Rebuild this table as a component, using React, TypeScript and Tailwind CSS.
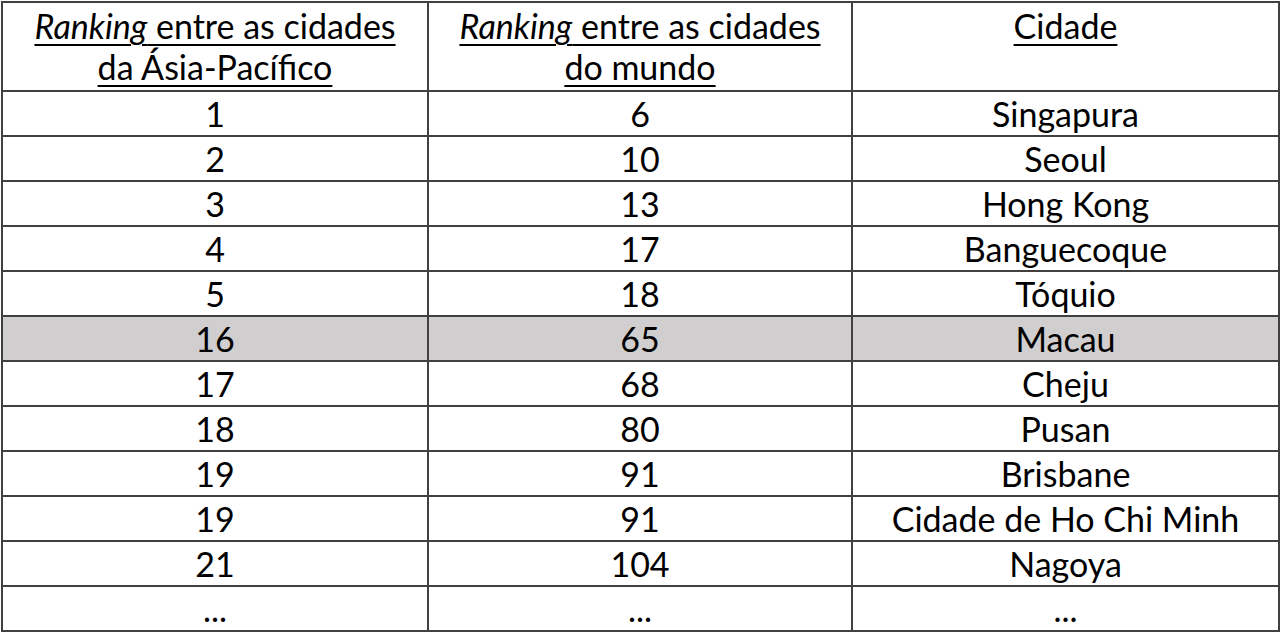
const rows: [string, string, string][] = [
  ['1', '6', 'Singapura'],
  ['2', '10', 'Seoul'],
  ['3', '13', 'Hong Kong'],
  ['4', '17', 'Banguecoque'],
  ['5', '18', 'Tóquio'],
  ['16', '65', 'Macau'],
  ['17', '68', 'Cheju'],
  ['18', '80', 'Pusan'],
  ['19', '91', 'Brisbane'],
  ['19', '91', 'Cidade de Ho Chi Minh'],
  ['21', '104', 'Nagoya'],
  ['...', '...', '...'],
];

const cell = 'border-2 border-[#404040] text-center align-middle p-0 leading-[40px]';
const head = 'border-2 border-[#404040] text-center align-top p-0 pt-[2px] leading-[41px]';
const ul = 'underline decoration-[2px] underline-offset-[5px]';

export default function App() {
  return (
    <div className="bg-white w-[1280px] h-[635px] pt-px pl-px font-['Lato',sans-serif] text-[34px] text-black">
      <table className="border-collapse border-2 border-[#404040] w-[1277px] table-fixed">
        <colgroup>
          <col className="w-[426px]" />
          <col className="w-[424px]" />
          <col className="w-[427px]" />
        </colgroup>
        <thead>
          <tr className="h-[89px]">
            <th className={`${head} font-normal`}>
              <span className={ul}>
                <i>Ranking</i> entre as cidades
              </span>
              <br />
              <span className={ul}>da Ásia-Pacífico</span>
            </th>
            <th className={`${head} font-normal`}>
              <span className={ul}>
                <i>Ranking</i> entre as cidades
              </span>
              <br />
              <span className={ul}>do mundo</span>
            </th>
            <th className={`${head} font-normal`}>
              <span className={ul}>Cidade</span>
            </th>
          </tr>
        </thead>
        <tbody>
          {rows.map((r, i) => (
            <tr key={i} className={`h-[45px] ${r[2] === 'Macau' ? 'bg-[#d0cece]' : ''}`}>
              <td className={cell}>{r[0]}</td>
              <td className={cell}>{r[1]}</td>
              <td className={cell}>{r[2]}</td>
            </tr>
          ))}
        </tbody>
      </table>
    </div>
  );
}
